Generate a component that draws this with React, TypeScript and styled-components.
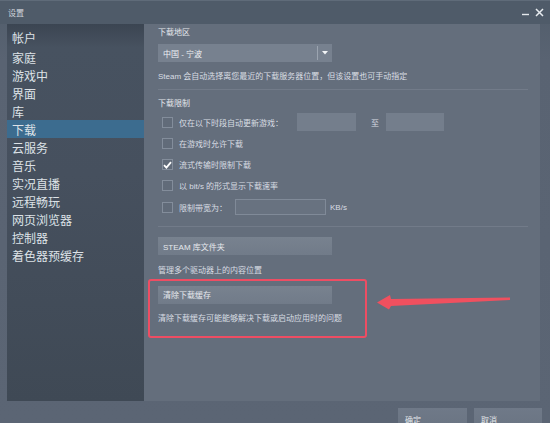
import React, { FC } from 'react';
import styled, { createGlobalStyle } from 'styled-components';

const GlobalStyle = createGlobalStyle`
  html, body {
    margin: 0;
    padding: 0;
    background: #5a6472;
  }
  * {
    box-sizing: border-box;
  }
`;

const Window = styled.div`
  position: relative;
  width: 550px;
  height: 423px;
  overflow: hidden;
  display: flex;
  flex-direction: column;
  background: linear-gradient(to bottom, #515d6b 0px, #596372 60px, #5b6574 100%);
  font-family: 'Liberation Sans', 'Noto Sans CJK SC', sans-serif;
  color: #d8dde3;
`;

const TitleBar = styled.div`
  height: 24px;
  flex: none;
  display: flex;
  align-items: center;
  justify-content: space-between;
  padding: 0 6px 0 8px;
  background: #4f5b69;
  border-top: 1px solid #5f6b79;
`;

const Title = styled.span`
  font-size: 8px;
  color: #cfd5dc;
`;

const WindowControls = styled.div`
  display: flex;
  align-items: center;
  gap: 5px;
  color: #e4e8ec;
`;

const Body = styled.div`
  height: 377px;
  flex: none;
  display: flex;
  padding: 0 10px 0 7px;
`;

const Sidebar = styled.ul`
  width: 137px;
  flex: none;
  margin: 0;
  padding: 4px 0 0;
  list-style: none;
  background: linear-gradient(to bottom, #3b4552 0px, #475260 24px, #46505e 40%, #3f4955 100%);
`;

const NavItem = styled.li<{ $active?: boolean }>`
  height: 18px;
  display: flex;
  align-items: center;
  padding-left: 5px;
  font-size: 12px;
  color: #dde2e7;
  background: ${(p) => (p.$active ? '#3c6c8f' : 'transparent')};
  &:first-child {
    margin-bottom: 2px;
  }
`;

const Content = styled.div`
  position: relative;
  flex: 1;
  display: flex;
  flex-direction: column;
  align-items: flex-start;
  padding: 3px 12px 0 14px;
  background: #646e7c;
  font-size: 8px;
`;

const Heading = styled.div<{ $top?: number }>`
  line-height: 11px;
  margin-top: ${(p) => p.$top ?? 0}px;
  color: #e4e8ec;
`;

const Note = styled.div<{ $top?: number }>`
  line-height: 11px;
  margin-top: ${(p) => p.$top ?? 0}px;
  color: #d8dde3;
`;

const Select = styled.div`
  width: 174px;
  height: 18px;
  margin-top: 6px;
  display: flex;
  align-items: center;
  background: #77818f;
  color: #eef1f4;
`;

const SelectText = styled.span`
  flex: 1;
  padding-left: 5px;
`;

const SelectArrow = styled.span`
  width: 15px;
  height: 14px;
  display: flex;
  align-items: center;
  justify-content: center;
  border-left: 1px solid #9ba4b0;
`;

const Divider = styled.div<{ $top: number; $bottom: number }>`
  align-self: stretch;
  height: 1px;
  margin: ${(p) => p.$top}px 0 ${(p) => p.$bottom}px;
  background: #727b89;
`;

const Options = styled.div`
  display: flex;
  flex-direction: column;
  gap: 3.3px;
  margin-top: 4.5px;
`;

const OptionRow = styled.div`
  height: 18px;
  display: flex;
  align-items: center;
  padding-left: 4px;
`;

const Box = styled.span<{ $checked?: boolean }>`
  width: 11px;
  height: 11px;
  flex: none;
  display: flex;
  align-items: center;
  justify-content: center;
  margin-right: 6px;
  border: 1px solid #838d9b;
  background: #616b79;
`;

const Field = styled.span<{ $width: number; $height?: number; $left: number; $outlined?: boolean }>`
  width: ${(p) => p.$width}px;
  height: ${(p) => p.$height ?? 18}px;
  margin-left: ${(p) => p.$left}px;
  background: ${(p) => (p.$outlined ? '#687280' : '#747e8c')};
  border: ${(p) => (p.$outlined ? '1px solid #808a98' : 'none')};
`;

const Inline = styled.span<{ $left: number }>`
  margin-left: ${(p) => p.$left}px;
`;

const ActionButton = styled.div<{ $top: number }>`
  width: 174px;
  height: 18px;
  margin-top: ${(p) => p.$top}px;
  display: flex;
  align-items: center;
  padding-left: 5px;
  background: linear-gradient(to bottom, #78828f, #717b89);
  color: #e6e9ed;
`;

const Highlight = styled.div`
  width: 219px;
  margin: 3px 0 0 -10px;
  padding: 5px 0 12px 8px;
  border: 2px solid #ee4d63;
  border-radius: 3px;
`;

const Pointer = styled.svg`
  position: absolute;
  left: 232px;
  top: 268px;
  width: 136px;
  height: 20px;
  overflow: visible;
`;

const Footer = styled.div`
  flex: none;
  display: flex;
  justify-content: flex-end;
  gap: 7px;
  padding: 7px 8px 0 0;
`;

const FooterButton = styled.div<{ $width: number }>`
  width: ${(p) => p.$width}px;
  height: 22px;
  display: flex;
  align-items: center;
  padding: 0 0 0 7px;
  font-size: 8px;
  color: #e2e6ea;
  background: linear-gradient(to bottom, #6f7988, #6a7482);
`;

const navItems = [
  '帐户',
  '家庭',
  '游戏中',
  '界面',
  '库',
  '下载',
  '云服务',
  '音乐',
  '实况直播',
  '远程畅玩',
  '网页浏览器',
  '控制器',
  '着色器预缓存',
];

const Check: FC = () => (
  <svg width="9" height="8" viewBox="0 0 9 8">
    <path d="M1 4.2 L3.4 6.6 L8 1.2" fill="none" stroke="#ffffff" strokeWidth="1.8" />
  </svg>
);

const App: FC = () => {
  return (
    <>
      <GlobalStyle />
      <Window>
        <TitleBar>
          <Title>设置</Title>
          <WindowControls>
            <svg width="8" height="10" viewBox="0 0 8 10">
              <path d="M0 6.5 H7" stroke="#e4e8ec" strokeWidth="1.4" />
            </svg>
            <svg width="9" height="9" viewBox="0 0 9 9">
              <path d="M1 1 L8 8 M8 1 L1 8" stroke="#e8ecf0" strokeWidth="1.5" />
            </svg>
          </WindowControls>
        </TitleBar>

        <Body>
          <Sidebar>
            {navItems.map((item) => (
              <NavItem key={item} $active={item === '下载'}>
                {item}
              </NavItem>
            ))}
          </Sidebar>

          <Content>
            <Heading>下载地区</Heading>
            <Select>
              <SelectText>中国 - 宁波</SelectText>
              <SelectArrow>
                <svg width="6" height="4" viewBox="0 0 6 4">
                  <path d="M0 0 H6 L3 3.5 Z" fill="#f2f4f6" />
                </svg>
              </SelectArrow>
            </Select>
            <Note $top={8.5}>Steam 会自动选择离您最近的下载服务器位置，但该设置也可手动指定</Note>

            <Divider $top={7} $bottom={8} />

            <Heading>下载限制</Heading>
            <Options>
              <OptionRow>
                <Box />
                仅在以下时段自动更新游戏：
                <Field $width={59} $left={14} />
                <Inline $left={15}>至</Inline>
                <Field $width={58} $left={7} />
              </OptionRow>
              <OptionRow>
                <Box />
                在游戏时允许下载
              </OptionRow>
              <OptionRow>
                <Box $checked>
                  <Check />
                </Box>
                流式传输时限制下载
              </OptionRow>
              <OptionRow>
                <Box />
                以 bit/s 的形式显示下载速率
              </OptionRow>
              <OptionRow>
                <Box />
                限制带宽为：
                <Field $width={91} $height={16} $left={8} $outlined />
                <Inline $left={4}>KB/s</Inline>
              </OptionRow>
            </Options>

            <Divider $top={10} $bottom={0} />

            <ActionButton $top={10}>STEAM 库文件夹</ActionButton>
            <Note $top={9.5}>管理多个驱动器上的内容位置</Note>

            <Highlight>
              <ActionButton $top={0}>清除下载缓存</ActionButton>
              <Note $top={9.5}>清除下载缓存可能能够解决下载或启动应用时的问题</Note>
            </Highlight>

            <Pointer viewBox="0 0 136 20">
              <path
                d="M1 10.5 L14 3 L15 7 L134 5.5 L134 8 L15 14 L13 17.5 Z"
                fill="#f0505f"
              />
            </Pointer>
          </Content>
        </Body>

        <Footer>
          <FooterButton $width={69}>确定</FooterButton>
          <FooterButton $width={68}>取消</FooterButton>
        </Footer>
      </Window>
    </>
  );
};

export default App;
